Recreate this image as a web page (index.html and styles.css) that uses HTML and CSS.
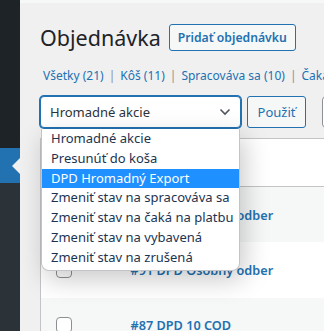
FILE: index.html
```html
<!DOCTYPE html>
<html lang="sk">
<head>
    <meta charset="UTF-8">
    <meta name="viewport" content="width=device-width, initial-scale=1.0">
    <title>Objednávka</title>
    <link rel="stylesheet" href="styles.css">
</head>
<body>

    <!-- Admin menu -->
    <div class="adminmenu">
        <div class="menu-top"></div>
        <div class="menu-current"></div>
        <div class="menu-rest"></div>
    </div>

    <!-- Page -->
    <div class="wrap">
        <div class="top-edge"></div>

        <div class="page-head">
            <h1>Objednávka</h1>
            <a class="page-title-action" href="#">Pridať objednávku</a>
        </div>

        <ul class="subsubsub">
            <li><a href="#">Všetky <span class="count">(21)</span></a><span class="sep">|</span></li>
            <li><a href="#">Kôš <span class="count">(11)</span></a><span class="sep">|</span></li>
            <li><a href="#">Spracováva sa <span class="count">(10)</span></a><span class="sep">|</span></li>
            <li><a href="#">Čaká na platbu <span class="count">(0)</span></a></li>
        </ul>

        <div class="tablenav">
            <div class="bulk">
                <div class="select">
                    <span>Hromadné akcie</span>
                    <svg width="12" height="8" viewBox="0 0 12 8"><polyline points="1.5,1.5 6,6 10.5,1.5" fill="none" stroke="#50575e" stroke-width="1.6"/></svg>
                </div>
                <ul class="options">
                    <li>Hromadné akcie</li>
                    <li>Presunúť do koša</li>
                    <li class="active">DPD Hromadný Export</li>
                    <li>Zmeniť stav na spracováva sa</li>
                    <li>Zmeniť stav na čaká na platbu</li>
                    <li>Zmeniť stav na vybavená</li>
                    <li>Zmeniť stav na zrušená</li>
                </ul>
            </div>
            <button class="apply">Použiť</button>
            <div class="filter"></div>
        </div>

        <table class="orders">
            <thead>
                <tr><td class="check"><span class="box"></span></td><td></td></tr>
            </thead>
            <tbody>
                <tr><td class="check"><span class="box"></span></td><td><a href="#">#92 DPD Osobný odber</a></td></tr>
                <tr><td class="check"><span class="box"></span></td><td><a href="#">#91 DPD Osobny odber</a></td></tr>
                <tr><td class="check"><span class="box"></span></td><td><a href="#">#87 DPD 10 COD</a></td></tr>
            </tbody>
        </table>
    </div>

</body>
</html>
```

FILE: styles.css
```css
* {
    margin: 0;
    padding: 0;
    box-sizing: border-box;
    font-family: "Noto Sans", "Open Sans", sans-serif;
}

body {
    display: flex;
    height: 331px;
    overflow: hidden;
    background: #f0f0f1;
    color: #1d2327;
}

/* Admin menu */
.adminmenu {
    width: 20px;
    flex-shrink: 0;
    display: flex;
    flex-direction: column;
}

.menu-top {
    height: 148px;
    background: #1d2327;
}

.menu-current {
    height: 35px;
    background: #2271b1;
    position: relative;
}

.menu-current::after {
    content: "";
    position: absolute;
    right: 0;
    top: 50%;
    margin-top: -8px;
    border: 8px solid transparent;
    border-right-color: #f0f0f1;
    border-left: 0;
}

.menu-rest {
    flex: 1;
    background: #2c3338;
}

/* Page */
.wrap {
    flex: 1;
    padding-left: 20px;
    min-width: 0;
    overflow: hidden;
}

.top-edge {
    height: 3px;
    margin-left: -20px;
    background: #f6f7f7;
}

.page-head {
    display: flex;
    align-items: center;
    gap: 8px;
    margin-top: 21px;
    height: 27px;
}

.page-head h1 {
    font-size: 21.5px;
    font-weight: 400;
    color: #1d2327;
    white-space: nowrap;
}

.page-title-action {
    display: inline-block;
    border: 1px solid #2271b1;
    border-radius: 3px;
    background: #f6f7f7;
    color: #2271b1;
    font-size: 12.2px;
    font-weight: 600;
    text-decoration: none;
    padding: 0 8px;
    height: 27px;
    line-height: 25px;
    white-space: nowrap;
}

/* Status links */
.subsubsub {
    list-style: none;
    display: flex;
    white-space: nowrap;
    margin-top: 16px;
    margin-left: 3px;
    font-size: 12px;
    line-height: 18px;
}

.subsubsub li {
    flex-shrink: 0;
}

.subsubsub a {
    color: #2271b1;
    text-decoration: none;
}

.subsubsub .sep {
    color: #8c8f94;
    margin: 0 5px;
}

/* Bulk actions */
.tablenav {
    display: flex;
    gap: 6px;
    margin-top: 11px;
    height: 32px;
}

.tablenav > * {
    flex-shrink: 0;
}

.bulk {
    position: relative;
}

.select {
    width: 201px;
    height: 32px;
    border: 1px solid #2271b1;
    box-shadow: 0 0 0 1px #2271b1;
    border-radius: 4px;
    background: #fff;
    display: flex;
    align-items: center;
    justify-content: space-between;
    padding: 0 9px 0 9px;
    font-size: 13px;
    color: #2c3338;
}

.options {
    position: absolute;
    top: 33px;
    left: 1px;
    width: 199px;
    list-style: none;
    background: #fff;
    border: 1px solid #c3c4c7;
    border-top: 0;
    border-radius: 0 0 8px 8px;
    box-shadow: 4px 8px 26px rgba(0, 0, 0, 0.22);
    font-size: 13px;
    color: #1d3450;
    z-index: 10;
    padding-bottom: 2px;
}

.options li {
    height: 19.8px;
    line-height: 19.8px;
    padding-left: 9px;
    white-space: nowrap;
}

.options li.active {
    background: #1e90ff;
    color: #fff;
}

.apply {
    width: 59px;
    height: 32px;
    border: 1px solid #2271b1;
    border-radius: 3px;
    background: #f6f7f7;
    color: #2271b1;
    font-size: 13px;
}

.filter {
    margin-left: 10px;
    width: 60px;
    height: 32px;
    border: 1px solid #8c8f94;
    border-radius: 4px;
    background: #fff;
}

/* Orders table */
.orders {
    margin-top: 10px;
    width: 320px;
    border-collapse: collapse;
    border: 1px solid #c3c4c7;
    background: #fff;
    font-size: 13px;
}

.orders thead td {
    height: 48px;
    border-bottom: 1px solid #c3c4c7;
}

.orders tbody td {
    height: 55.5px;
}

.orders tbody tr:nth-child(odd) {
    background: #f6f7f7;
}

.orders td.check {
    width: 90px;
    padding-left: 15px;
    vertical-align: middle;
}

.box {
    display: block;
    width: 16px;
    height: 16px;
    border: 1px solid #8c8f94;
    border-radius: 4px;
    background: #fff;
}

.orders a {
    color: #2271b1;
    font-weight: 600;
    text-decoration: none;
    font-size: 12.7px;
}
```
